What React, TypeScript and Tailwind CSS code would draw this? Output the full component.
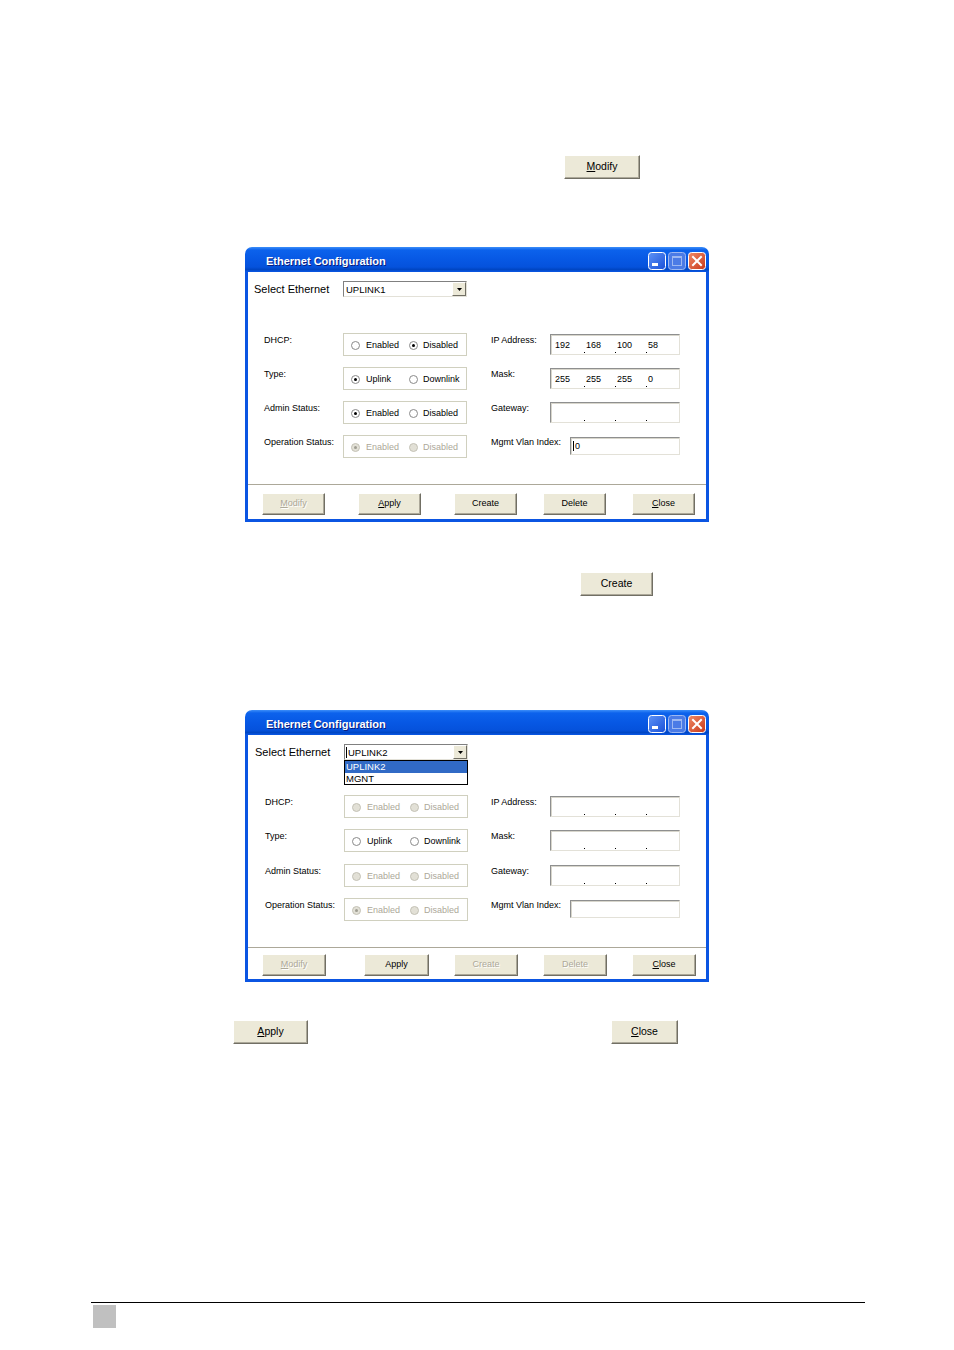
import React, { Fragment } from "react";

const F = "font-['Liberation_Sans',Arial,sans-serif]";

function U({ text, u }: { text: string; u?: boolean }) {
  if (!u) return <>{text}</>;
  return (
    <>
      <span className="underline underline-offset-[1px] decoration-[1px]">{text[0]}</span>
      {text.slice(1)}
    </>
  );
}

function Btn({
  label,
  u,
  disabled,
  className,
}: {
  label: string;
  u?: boolean;
  disabled?: boolean;
  className: string;
}) {
  return (
    <div
      className={`flex items-center justify-center bg-[#ECE9D8] border border-t-white border-l-white border-b-[#716F64] border-r-[#716F64] shadow-[inset_-1px_-1px_0_#ACA899] ${
        disabled ? "text-[#ACA899] [text-shadow:1px_1px_0_#ffffff]" : "text-black"
      } ${className}`}
    >
      <span>
        <U text={label} u={u} />
      </span>
    </div>
  );
}

function Radio({ checked, disabled }: { checked?: boolean; disabled?: boolean }) {
  return (
    <div
      className={`w-[9px] h-[9px] shrink-0 rounded-full border flex items-center justify-center ${
        disabled ? "border-[#C4C2B6] bg-[#E2E0D6]" : "border-[#8A8A8A] bg-white"
      }`}
    >
      {checked && (
        <div className={`w-[3px] h-[3px] rounded-full ${disabled ? "bg-[#9F9D92]" : "bg-black"}`} />
      )}
    </div>
  );
}

function Group({
  a,
  b,
  sel,
  disabled,
}: {
  a: string;
  b: string;
  sel: number;
  disabled?: boolean;
}) {
  const tc = disabled ? "text-[#ACA899]" : "text-black";
  return (
    <div className="w-[124px] h-[23px] border border-[#D0D0BF] flex items-center pl-[7px] pt-[2px] shrink-0">
      <div className="w-[58px] flex items-center gap-[6px]">
        <Radio checked={sel === 0} disabled={disabled} />
        <span className={`text-[9px] leading-[11px] ${tc}`}>{a}</span>
      </div>
      <div className="flex items-center gap-[5px]">
        <Radio checked={sel === 1} disabled={disabled} />
        <span className={`text-[9px] leading-[11px] ${tc}`}>{b}</span>
      </div>
    </div>
  );
}

function IpField({ vals }: { vals: string[] }) {
  return (
    <div className="w-[130px] h-[21px] mt-[1px] bg-white border border-t-[#8E8F8F] border-l-[#8E8F8F] border-b-[#E3E1D8] border-r-[#E3E1D8] shadow-[inset_1px_1px_0_#D8D6CC] flex items-center pl-[3px] pt-[1px] shrink-0">
      {vals.map((v, i) => (
        <Fragment key={i}>
          <div className="w-[29px] h-[11px] leading-[11px] pl-[1px] text-[9px] text-black">{v}</div>
          {i < 3 && (
            <div className="w-[2px] h-[11px] flex items-end justify-center">
              <div className="w-[1px] h-[1px] bg-black translate-y-[2px]" />
            </div>
          )}
        </Fragment>
      ))}
    </div>
  );
}

function MgmtField({ val }: { val: string }) {
  return (
    <div className="w-[110px] h-[18px] mt-[2px] bg-white border border-t-[#8E8F8F] border-l-[#8E8F8F] border-b-[#E3E1D8] border-r-[#E3E1D8] shadow-[inset_1px_1px_0_#D8D6CC] flex items-center pl-[2px] shrink-0">
      {val !== "" && <div className="w-[1px] h-[10px] bg-black mr-[1px]" />}
      <span className="text-[9px] leading-[11px] text-black">{val}</span>
    </div>
  );
}

function Label({ text, w }: { text: string; w: string }) {
  return <div className={`${w} pt-[2px] text-[9px] leading-[11px] text-black shrink-0`}>{text}</div>;
}

function TitleBar() {
  return (
    <div className="h-[25px] flex items-start pt-[5px] pl-[21px] pr-[3px] rounded-t-[7px] bg-[linear-gradient(to_bottom,#3C8EF9_0%,#0C62EC_12%,#0758E4_50%,#0552DC_80%,#0046C4_90%,#0A58E6_100%)]">
      <div className="h-[18px] leading-[18px] text-[11px] font-bold text-white [text-shadow:1px_1px_0_#0A1E80]">
        Ethernet Configuration
      </div>
      <div className="ml-auto flex gap-[2px]">
        <svg width="18" height="18" viewBox="0 0 18 18">
          <defs>
            <linearGradient id="gmin" x1="0" y1="0" x2="1" y2="1">
              <stop offset="0" stopColor="#5E93F6" />
              <stop offset="1" stopColor="#1950D8" />
            </linearGradient>
          </defs>
          <rect x="0.5" y="0.5" width="17" height="17" rx="3" fill="url(#gmin)" stroke="#FFFFFF" />
          <rect x="4" y="11" width="6" height="3" fill="#FFFFFF" />
        </svg>
        <svg width="18" height="18" viewBox="0 0 18 18">
          <rect x="0.5" y="0.5" width="17" height="17" rx="3" fill="#4B7BE6" stroke="#9DB8F2" />
          <rect x="4.5" y="4.5" width="9" height="9" fill="none" stroke="#9DB8F2" />
          <rect x="4" y="4" width="10" height="2" fill="#9DB8F2" />
        </svg>
        <svg width="18" height="18" viewBox="0 0 18 18">
          <defs>
            <linearGradient id="gcl" x1="0" y1="0" x2="1" y2="1">
              <stop offset="0" stopColor="#F08A66" />
              <stop offset="1" stopColor="#C8381A" />
            </linearGradient>
          </defs>
          <rect x="0.5" y="0.5" width="17" height="17" rx="3" fill="url(#gcl)" stroke="#FFFFFF" />
          <path d="M5 5 L13 13 M13 5 L5 13" stroke="#FFFFFF" strokeWidth="2" strokeLinecap="square" />
        </svg>
      </div>
    </div>
  );
}

function SelectBox({ val, focus }: { val: string; focus?: boolean }) {
  return (
    <div className="w-[124px] h-[16px] bg-white border border-t-[#808080] border-l-[#808080] border-b-[#E3E1D8] border-r-[#E3E1D8] flex items-center pl-[1px] shrink-0">
      {focus && <div className="w-[1px] h-[11px] bg-black" />}
      <span className="text-[9.5px] leading-[11px] text-black ml-[1px]">{val}</span>
      <div className="ml-auto mr-[0px] w-[14px] h-[14px] bg-[#ECE9D8] border border-t-white border-l-white border-b-[#716F64] border-r-[#716F64] flex items-center justify-center">
        <svg width="5" height="3" viewBox="0 0 5 3">
          <path d="M0 0 H5 L2.5 3 Z" fill="#000" />
        </svg>
      </div>
    </div>
  );
}

function Dialog1() {
  return (
    <div className={`w-[464px] ml-[245px] ${F}`}>
      <TitleBar />
      <div className="border-x-[3px] border-b-[3px] border-[#0B55E2] bg-white pt-[9px] pb-[4px]">
        <div className="flex items-center pl-[6px]">
          <div className="w-[89px] text-[11px] leading-[14px] text-black">Select Ethernet</div>
          <SelectBox val="UPLINK1" />
        </div>
        <div className="mt-[36px] flex flex-col gap-[11px]">
          <div className="flex pl-[16px]">
            <Label text="DHCP:" w="w-[79px]" />
            <Group a="Enabled" b="Disabled" sel={1} />
            <div className="w-[24px]" />
            <Label text="IP Address:" w="w-[59px]" />
            <IpField vals={["192", "168", "100", "58"]} />
          </div>
          <div className="flex pl-[16px]">
            <Label text="Type:" w="w-[79px]" />
            <Group a="Uplink" b="Downlink" sel={0} />
            <div className="w-[24px]" />
            <Label text="Mask:" w="w-[59px]" />
            <IpField vals={["255", "255", "255", "0"]} />
          </div>
          <div className="flex pl-[16px]">
            <Label text="Admin Status:" w="w-[79px]" />
            <Group a="Enabled" b="Disabled" sel={0} />
            <div className="w-[24px]" />
            <Label text="Gateway:" w="w-[59px]" />
            <IpField vals={["", "", "", ""]} />
          </div>
          <div className="flex pl-[16px]">
            <Label text="Operation Status:" w="w-[79px]" />
            <Group a="Enabled" b="Disabled" sel={0} disabled />
            <div className="w-[24px]" />
            <Label text="Mgmt Vlan Index:" w="w-[79px]" />
            <MgmtField val="0" />
          </div>
        </div>
        <div className="mt-[26px] h-[1px] bg-[#ACA899]" />
        <div className="mt-[8px] flex text-[9px]">
          <Btn label="Modify" u disabled className="w-[63px] h-[22px] ml-[14px]" />
          <Btn label="Apply" u className="w-[63px] h-[22px] ml-[33px]" />
          <Btn label="Create" className="w-[63px] h-[22px] ml-[33px]" />
          <Btn label="Delete" className="w-[63px] h-[22px] ml-[26px]" />
          <Btn label="Close" u className="w-[63px] h-[22px] ml-[26px]" />
        </div>
      </div>
    </div>
  );
}

function Dialog2() {
  return (
    <div className={`w-[464px] ml-[245px] ${F}`}>
      <TitleBar />
      <div className="border-x-[3px] border-b-[3px] border-[#0B55E2] bg-white pt-[9px] pb-[3px]">
        <div className="flex items-center pl-[7px]">
          <div className="w-[89px] text-[11px] leading-[14px] text-black">Select Ethernet</div>
          <div className="relative">
            <SelectBox val="UPLINK2" focus />
            <div className="absolute left-0 top-[16px] w-[124px] h-[25px] bg-white border border-black z-10 flex flex-col">
              <div className="h-[12px] bg-[#316AC5] text-white text-[9.5px] leading-[12px] pl-[1px]">UPLINK2</div>
              <div className="h-[11px] text-black text-[9.5px] leading-[11px] pl-[1px]">MGNT</div>
            </div>
          </div>
        </div>
        <div className="mt-[35px] flex flex-col gap-[11px]">
          <div className="flex pl-[17px]">
            <Label text="DHCP:" w="w-[79px]" />
            <Group a="Enabled" b="Disabled" sel={-1} disabled />
            <div className="w-[23px]" />
            <Label text="IP Address:" w="w-[59px]" />
            <IpField vals={["", "", "", ""]} />
          </div>
          <div className="flex pl-[17px]">
            <Label text="Type:" w="w-[79px]" />
            <Group a="Uplink" b="Downlink" sel={-1} />
            <div className="w-[23px]" />
            <Label text="Mask:" w="w-[59px]" />
            <IpField vals={["", "", "", ""]} />
          </div>
          <div className="flex pl-[17px] mt-[1px]">
            <Label text="Admin Status:" w="w-[79px]" />
            <Group a="Enabled" b="Disabled" sel={-1} disabled />
            <div className="w-[23px]" />
            <Label text="Gateway:" w="w-[59px]" />
            <IpField vals={["", "", "", ""]} />
          </div>
          <div className="flex pl-[17px]">
            <Label text="Operation Status:" w="w-[79px]" />
            <Group a="Enabled" b="Disabled" sel={0} disabled />
            <div className="w-[23px]" />
            <Label text="Mgmt Vlan Index:" w="w-[79px]" />
            <MgmtField val="" />
          </div>
        </div>
        <div className="mt-[26px] h-[1px] bg-[#ACA899]" />
        <div className="mt-[6px] flex text-[9px]">
          <Btn label="Modify" u disabled className="w-[64px] h-[22px] ml-[14px]" />
          <Btn label="Apply" className="w-[65px] h-[22px] ml-[38px]" />
          <Btn label="Create" disabled className="w-[64px] h-[22px] ml-[25px]" />
          <Btn label="Delete" disabled className="w-[64px] h-[22px] ml-[25px]" />
          <Btn label="Close" u className="w-[64px] h-[22px] ml-[25px]" />
        </div>
      </div>
    </div>
  );
}

export default function App() {
  return (
    <div className={`w-[954px] h-[1350px] bg-white overflow-hidden pt-[155px] ${F}`}>
      <Btn label="Modify" u className="w-[76px] h-[24px] ml-[564px] text-[10.5px]" />
      <div className="mt-[68px]">
        <Dialog1 />
      </div>
      <Btn label="Create" className="w-[73px] h-[24px] ml-[580px] mt-[50px] text-[10.5px]" />
      <div className="mt-[114px]">
        <Dialog2 />
      </div>
      <div className="mt-[38px] flex">
        <Btn label="Apply" u className="w-[75px] h-[24px] ml-[233px] text-[10.5px]" />
        <Btn label="Close" u className="w-[67px] h-[24px] ml-[303px] text-[10.5px]" />
      </div>
      <div className="mt-[258px] ml-[91px] w-[774px] h-[1px] bg-black" />
      <div className="mt-[2px] ml-[93px] w-[23px] h-[23px] bg-[#C0C0C0]" />
    </div>
  );
}
